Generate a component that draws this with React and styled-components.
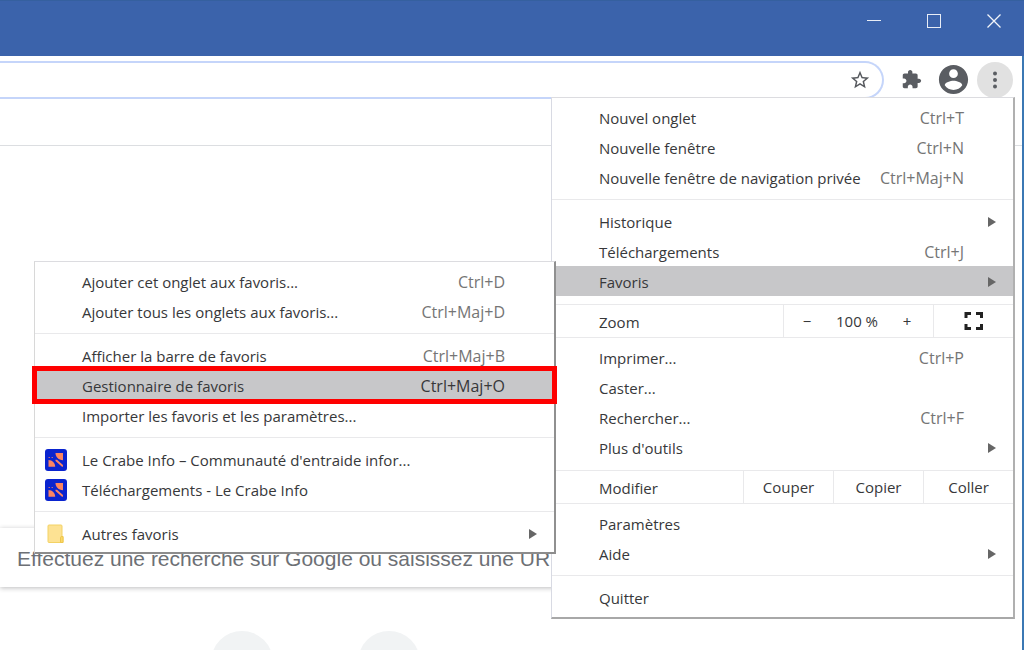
import React, { Component } from "react";
import styled, { createGlobalStyle } from "styled-components";

const GlobalStyle = createGlobalStyle`
  * {
    box-sizing: border-box;
  }
  body {
    margin: 0;
    background: #fff;
    font-family: "Open Sans", "Noto Sans", sans-serif;
    overflow: hidden;
  }
  button {
    border: none;
    padding: 0;
    background: none;
    color: inherit;
    font: inherit;
  }
  svg {
    display: block;
  }
`;

const BrowserWindow = styled.div`
  position: relative;
  min-height: 100vh;
  border-right: 2px solid #3b78b4;
`;

const TitleBar = styled.header`
  display: flex;
  justify-content: flex-end;
  height: 56px;
  margin-right: -2px;
  border-top: 1px solid #35609f;
  background: #3b63ab;
`;

const WindowButton = styled.button`
  display: flex;
  align-items: center;
  justify-content: center;
  width: 60px;
  height: 40px;
`;

const Toolbar = styled.div`
  display: flex;
  align-items: center;
  height: 43px;
  padding: 4px 9px 0 0;
`;

const AddressBar = styled.div`
  display: flex;
  align-items: center;
  flex: 1;
  height: 38px;
  padding-right: 11px;
  border: solid #c5d5fa;
  border-width: 2px 2px 2px 0;
  border-radius: 0 19px 19px 0;
  color: #55585d;
`;

const AddressInput = styled.input`
  flex: 1;
  min-width: 0;
  border: none;
  outline: none;
  background: none;
  font: inherit;
`;

const Actions = styled.div`
  display: flex;
  align-items: center;
  gap: 6px;
  padding-left: 9px;
  color: #5a5d62;
`;

const ToolbarButton = styled.button`
  display: flex;
  align-items: center;
  justify-content: center;
  width: 36px;
  height: 36px;
  border-radius: 50%;
  background: ${(props) => (props.$open ? "#e1e1e1" : "none")};
`;

const BookmarksBar = styled.div`
  height: 47px;
  border-bottom: 1px solid #dcdee1;
`;

const NewTabPage = styled.main`
  padding: 382px 56px 0 0;
`;

const SearchBox = styled.form`
  height: 59px;
  padding: 3px 17px 0;
  border-radius: 0 4px 4px 0;
  box-shadow: 0 1px 5px rgba(32, 33, 36, 0.3);
`;

const SearchInput = styled.input`
  width: 100%;
  height: 56px;
  padding: 0;
  border: none;
  outline: none;
  background: none;
  font-family: "Liberation Sans", Arial, sans-serif;
  font-size: 21px;
  &::placeholder {
    color: #6d7075;
    opacity: 1;
  }
`;

const Shortcuts = styled.div`
  display: flex;
  gap: 85px;
  height: 63px;
  padding: 44px 0 0 211px;
  overflow: hidden;
`;

const ShortcutTile = styled.span`
  flex: none;
  width: 62px;
  height: 62px;
  border-radius: 50%;
  background: #f1f3f4;
`;

const Separator = styled.hr`
  height: 1px;
  margin: 7px 0 6px;
  border: none;
  background: #e9e9eb;
`;

const MenuPanel = styled.div`
  position: absolute;
  z-index: 2;
  border: solid;
  border-width: 1px 2px 2px 1px;
  border-color: #dcdce0 #b0b0b0 #a8a8a8 #d8dae3;
  background: #fff;
  color: #37383a;
  font-size: 15px;
  line-height: 20px;
`;

const MainMenu = styled(MenuPanel)`
  top: 97px;
  right: 7px;
  width: 464px;
  padding: 4px 0 5px;
`;

const SubMenu = styled(MenuPanel)`
  top: -5px;
  right: calc(100% - 4px);
  width: 522px;
  padding: 4px 0;
  border-color: #dcdce0 #909090 #8c8c8c #d8d8d8;
`;

const ItemWrap = styled.div`
  position: relative;
`;

const Item = styled.button`
  display: flex;
  align-items: center;
  width: 100%;
  height: 30px;
  padding: 2px 17px 0 0;
  text-align: left;
  background: ${(props) => (props.$active ? "#c7c7c9" : "none")};
`;

const IconSlot = styled.span`
  flex: none;
  width: 47px;
  padding-left: 10px;
`;

const Label = styled.span`
  flex: 1;
  white-space: nowrap;
`;

const Keys = styled.span`
  padding-right: 32px;
  color: ${(props) => (props.$active ? "#37383a" : "#757575")};
  font-size: 16px;
`;

const ControlRow = styled.div`
  display: flex;
  align-items: stretch;
  height: 34px;
  margin: 8px 0 4px;
  border: solid #e9e9eb;
  border-width: 1px 0;
`;

const ControlLabel = styled.span`
  flex: 1;
  padding: 7px 0 0 47px;
`;

const ControlGroup = styled.div`
  display: flex;
  align-items: center;
  justify-content: space-between;
  width: 150px;
  padding: 0 19px 0 16px;
  border-left: 1px solid #e9e9eb;
`;

const StepButton = styled.button`
  width: 14px;
`;

const ControlButton = styled.button`
  display: flex;
  align-items: center;
  justify-content: center;
  width: ${(props) => props.$width || 90}px;
  border-left: 1px solid #e9e9eb;
`;

const Highlight = styled.span`
  position: absolute;
  z-index: 3;
  top: -4px;
  right: -3px;
  bottom: -4px;
  left: -3px;
  border: 5px solid #fe0000;
  pointer-events: none;
`;

const Arrow = () => (
  <svg width="8" height="10" viewBox="0 0 8 10" fill="#666">
    <path d="M0 0L8 5L0 10Z" />
  </svg>
);

const Glyph = ({ size, d }) => (
  <svg width={size} height={size} viewBox="0 0 24 24" fill="currentColor">
    <path d={d} />
  </svg>
);

const STAR =
  "M22 9.24l-7.19-.62L12 2 9.19 8.63 2 9.24l5.46 4.73L5.82 21 12 17.27 18.18 21l-1.63-7.03L22 9.24zM12 15.4l-3.76 2.27 1-4.28-3.32-2.88 4.38-.38L12 6.1l1.71 4.04 4.38.38-3.32 2.88 1 4.28L12 15.4z";
const PUZZLE =
  "M20.5 11H19V7c0-1.1-.9-2-2-2h-4V3.5C13 2.12 11.88 1 10.5 1S8 2.12 8 3.5V5H4c-1.1 0-1.99.9-1.99 2v3.8H3.5c1.49 0 2.7 1.21 2.7 2.7s-1.21 2.7-2.7 2.7H2V20c0 1.1.9 2 2 2h3.8v-1.5c0-1.49 1.21-2.7 2.7-2.7 1.49 0 2.7 1.21 2.7 2.7V22H17c1.1 0 2-.9 2-2v-4h1.5c1.38 0 2.5-1.12 2.5-2.5S21.88 11 20.5 11z";
const ACCOUNT =
  "M12 2C6.48 2 2 6.48 2 12s4.48 10 10 10 10-4.48 10-10S17.52 2 12 2zm0 3c1.66 0 3 1.34 3 3s-1.34 3-3 3-3-1.34-3-3 1.34-3 3-3zm0 14.2c-2.5 0-4.71-1.28-6-3.22.03-1.99 4-3.08 6-3.08 1.99 0 5.97 1.09 6 3.08-1.29 1.94-3.5 3.22-6 3.22z";

const CrabIcon = () => (
  <svg width="22" height="22" viewBox="0 0 22 22">
    <rect width="22" height="22" rx="3" fill="#0a24cf" />
    <g fill="#fb8562">
      <path d="M10.500 4H18V11.300C13.500 11 10.500 8 10.500 4Z" />
      <path d="M3.500 11C7.500 11 10 14 10.200 17.700H3.500Z" />
      <path d="M10.500 10.700H12L18 16V17.700H17L10.500 12Z" />
      <path d="M3.500 8H5V9H3.500ZM6.500 8H8V9H6.500Z" opacity="0.7" />
    </g>
  </svg>
);

const FolderIcon = () => (
  <svg width="22" height="20" viewBox="0 0 22 20">
    <path
      d="M4 1H16Q17 1 17 2V12.500H18V18.500H4Q3 18.500 3 17.500V2Q3 1 4 1Z"
      fill="#fde293"
      stroke="#f3d264"
    />
    <path d="M15.500 18.500V13.500Q15.500 12.500 17 12.500H18V18.500Z" fill="#fbd867" stroke="#eec64d" />
  </svg>
);

const FullscreenIcon = () => (
  <svg width="20" height="20" viewBox="0 0 20 20" fill="none" stroke="#222" strokeWidth="3">
    <path d="M2 7V2.500H7M12 2.500H17.500V7M17.500 13V17.500H12M7 17.500H2V13" />
  </svg>
);

const MenuItem = ({ label, keys, icon, arrow, active }) => (
  <Item type="button" $active={active}>
    <IconSlot>{icon}</IconSlot>
    <Label>{label}</Label>
    {keys && <Keys $active={active}>{keys}</Keys>}
    {arrow && <Arrow />}
  </Item>
);

const BookmarksMenu = () => (
  <SubMenu>
    <MenuItem label="Ajouter cet onglet aux favoris..." keys="Ctrl+D" />
    <MenuItem label="Ajouter tous les onglets aux favoris..." keys="Ctrl+Maj+D" />
    <Separator />
    <MenuItem label="Afficher la barre de favoris" keys="Ctrl+Maj+B" />
    <ItemWrap>
      <MenuItem label="Gestionnaire de favoris" keys="Ctrl+Maj+O" active />
      <Highlight />
    </ItemWrap>
    <MenuItem label="Importer les favoris et les paramètres..." />
    <Separator />
    <MenuItem
      label="Le Crabe Info – Communauté d'entraide infor..."
      icon={<CrabIcon />}
    />
    <MenuItem label="Téléchargements - Le Crabe Info" icon={<CrabIcon />} />
    <Separator />
    <MenuItem label="Autres favoris" icon={<FolderIcon />} arrow />
  </SubMenu>
);

export default class App extends Component {
  render() {
    return (
      <BrowserWindow>
        <GlobalStyle />
        <TitleBar>
          <WindowButton type="button" aria-label="Réduire">
            <svg width="14" height="14" viewBox="0 0 14 14" stroke="#e8edf6">
              <path d="M0 6.500H14" />
            </svg>
          </WindowButton>
          <WindowButton type="button" aria-label="Agrandir">
            <svg width="14" height="14" viewBox="0 0 14 14" fill="none" stroke="#e8edf6">
              <rect x="0.500" y="0.500" width="13" height="13" />
            </svg>
          </WindowButton>
          <WindowButton type="button" aria-label="Fermer">
            <svg width="14" height="14" viewBox="0 0 14 14" stroke="#f2f5fa" strokeWidth="1.300">
              <path d="M0.500 0.500L13.500 13.500M13.500 0.500L0.500 13.500" />
            </svg>
          </WindowButton>
        </TitleBar>
        <Toolbar>
          <AddressBar>
            <AddressInput type="text" aria-label="Adresse" />
            <button type="button" aria-label="Ajouter aux favoris">
              <Glyph size={22} d={STAR} />
            </button>
          </AddressBar>
          <Actions>
            <ToolbarButton type="button" aria-label="Extensions">
              <Glyph size={21} d={PUZZLE} />
            </ToolbarButton>
            <ToolbarButton type="button" aria-label="Profil">
              <Glyph size={35} d={ACCOUNT} />
            </ToolbarButton>
            <ToolbarButton type="button" aria-label="Menu" $open>
              <svg width="6" height="18" viewBox="0 0 6 18" fill="currentColor">
                <circle cx="3" cy="2.500" r="2" />
                <circle cx="3" cy="9" r="2" />
                <circle cx="3" cy="15.500" r="2" />
              </svg>
            </ToolbarButton>
          </Actions>
        </Toolbar>
        <BookmarksBar />
        <NewTabPage>
          <SearchBox>
            <SearchInput
              type="text"
              aria-label="Recherche"
              placeholder="Effectuez une recherche sur Google ou saisissez une URL"
            />
          </SearchBox>
          <Shortcuts>
            <ShortcutTile />
            <ShortcutTile />
          </Shortcuts>
        </NewTabPage>
        <MainMenu>
          <MenuItem label="Nouvel onglet" keys="Ctrl+T" />
          <MenuItem label="Nouvelle fenêtre" keys="Ctrl+N" />
          <MenuItem label="Nouvelle fenêtre de navigation privée" keys="Ctrl+Maj+N" />
          <Separator />
          <MenuItem label="Historique" arrow />
          <MenuItem label="Téléchargements" keys="Ctrl+J" />
          <ItemWrap>
            <MenuItem label="Favoris" arrow active />
            <BookmarksMenu />
          </ItemWrap>
          <ControlRow>
            <ControlLabel>Zoom</ControlLabel>
            <ControlGroup>
              <StepButton type="button" aria-label="Zoom arrière">−</StepButton>
              <span>100 %</span>
              <StepButton type="button" aria-label="Zoom avant">+</StepButton>
            </ControlGroup>
            <ControlButton type="button" aria-label="Plein écran" $width={80}>
              <FullscreenIcon />
            </ControlButton>
          </ControlRow>
          <MenuItem label="Imprimer..." keys="Ctrl+P" />
          <MenuItem label="Caster..." />
          <MenuItem label="Rechercher..." keys="Ctrl+F" />
          <MenuItem label="Plus d'outils" arrow />
          <ControlRow>
            <ControlLabel>Modifier</ControlLabel>
            <ControlButton type="button">Couper</ControlButton>
            <ControlButton type="button">Copier</ControlButton>
            <ControlButton type="button">Coller</ControlButton>
          </ControlRow>
          <MenuItem label="Paramètres" />
          <MenuItem label="Aide" arrow />
          <Separator />
          <MenuItem label="Quitter" />
        </MainMenu>
      </BrowserWindow>
    );
  }
}
